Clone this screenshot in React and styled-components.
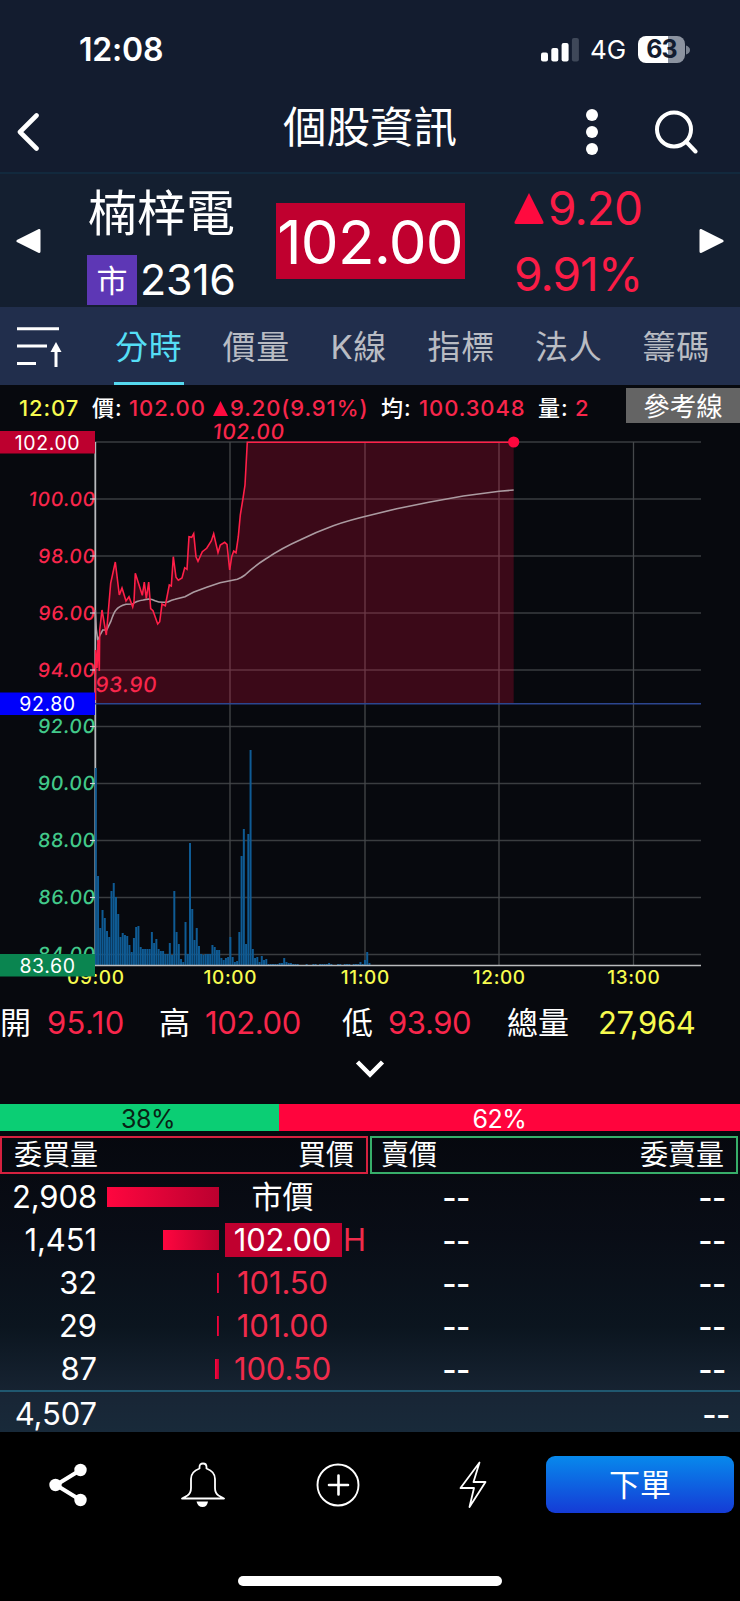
import { useState } from 'react';
import styled, { createGlobalStyle } from 'styled-components';

const GlobalStyle = createGlobalStyle`
  * {
    box-sizing: border-box;
  }
  body {
    margin: 0;
    background: #000;
    color: #fff;
    font-family: Inter, 'Noto Sans CJK TC', sans-serif;
  }
  button {
    padding: 0;
    border: 0;
    background: none;
    color: inherit;
    font-family: inherit;
    cursor: pointer;
  }
  svg {
    display: block;
    flex: none;
  }
`;

const Screen = styled.div`
  width: 740px;
  height: 1601px;
  overflow: hidden;
  display: flex;
  flex-direction: column;
`;

const StatusBar = styled.div`
  height: 98px;
  padding: 1px 50px 0 79px;
  display: flex;
  align-items: center;
  background: #131c2f;
`;

const Clock = styled.div`
  flex: 1;
  font-size: 32px;
  font-weight: 600;
  line-height: 40px;
  letter-spacing: -0.2px;
`;

const Network = styled.div`
  width: 59px;
  padding-left: 11px;
  font-size: 26px;
  line-height: 40px;
  letter-spacing: -0.1px;
`;

const Battery = styled.div`
  width: 47px;
  height: 27px;
  margin-right: 1px;
  border-radius: 8px;
  background: linear-gradient(90deg, #fff 63%, #8c93a0 63%);
  color: #131c2f;
  font-size: 25px;
  font-weight: 700;
  line-height: 27px;
  letter-spacing: -1px;
  text-align: center;
`;

const Header = styled.div`
  height: 76px;
  padding-bottom: 7px;
  display: grid;
  grid-template-columns: 280px 180px 119px 26px 1fr;
  align-items: center;
  background: #131c2f;
  border-bottom: 2px solid #12293d;
`;

const IconButton = styled.button`
  display: flex;
  padding-left: ${({ $left }) => $left || 0}px;
`;

const PageTitle = styled.div`
  grid-column: 2;
  margin-top: -9px;
  font-size: 43.5px;
  line-height: 50px;
  text-align: center;
  white-space: nowrap;
`;

const Quote = styled.div`
  height: 133px;
  display: grid;
  grid-template-columns: 87px 189px 189px 234px 41px;
  background: #141f30;
`;

const Arrow = styled.button`
  padding: 0 0 0 ${({ $left }) => $left}px;
  display: flex;
  align-items: center;
`;

const Stock = styled.div`
  display: flex;
  flex-direction: column;
`;

const StockName = styled.div`
  height: 80px;
  padding: 11px 0 0 1px;
  font-size: 49px;
  line-height: 57px;
`;

const StockCode = styled.div`
  display: flex;
  align-items: center;
  gap: 3px;
  font-size: 43px;
  line-height: 51px;
  letter-spacing: -0.3px;
`;

const Market = styled.span`
  width: 50px;
  height: 50px;
  background: #5d37b5;
  font-size: 31px;
  line-height: 51px;
  text-align: center;
  letter-spacing: 0;
`;

const Price = styled.div`
  height: 76px;
  margin-top: 29px;
  padding-right: 1px;
  background: #c0002f;
  font-size: 60px;
  line-height: 78px;
  text-align: center;
  letter-spacing: -0.8px;
`;

const Change = styled.div`
  padding: 1px 0 0 49px;
  color: #fb1c46;
  font-size: 46px;
  line-height: 66px;
  letter-spacing: -0.9px;
`;

const ChangeRow = styled.div`
  display: flex;
  align-items: center;
  gap: 4px;
`;

const Tabs = styled.div`
  height: 78px;
  display: flex;
  gap: 37.5px;
  background: #212e4c;
  overflow: hidden;
`;

const SortButton = styled(IconButton)`
  width: 76.2px;
`;

const Tab = styled.button`
  min-width: ${({ $narrow }) => ($narrow ? 60 : 70)}px;
  height: 78px;
  border-bottom: 3px solid ${({ $active }) => ($active ? '#55d8ee' : 'transparent')};
  color: ${({ $active }) => ($active ? '#55def5' : '#b9bcc3')};
  font-size: 33px;
  letter-spacing: 0.6px;
  white-space: nowrap;
`;

const ChartPanel = styled.div`
  height: 719px;
  background: #07090e;
`;

const Info = styled.div`
  height: 40px;
  padding-left: 19px;
  display: grid;
  grid-template-columns: 73px 37px 84px 168px 38px 119px 37px 51px 1fr;
  font-size: 22px;
  font-weight: 500;
  line-height: 47px;
  letter-spacing: 0.9px;
  white-space: nowrap;
`;

const InfoText = styled.span`
  color: ${({ $color }) => $color || '#fff'};
`;

const InfoMark = styled.svg`
  display: inline-block;
  margin-right: 2px;
`;

const GuideButton = styled.button`
  height: 35px;
  margin-top: 3px;
  background: #646464;
  color: #fff;
  font-size: 26.5px;
  line-height: 34px;
`;

const ChartCanvas = styled.svg`
  overflow: visible;
`;

const Axis = styled.text`
  fill: ${({ $color }) => $color};
  font-size: ${({ $size }) => $size || 19.5}px;
  font-weight: ${({ $weight }) => $weight || 400};
  letter-spacing: 0.6px;
  text-anchor: ${({ $anchor }) => $anchor || 'middle'};
  transform-box: fill-box;
  transform-origin: center;
  transform: ${({ $slanted }) => ($slanted ? 'skewX(-6deg)' : 'none')};
`;

const Stats = styled.div`
  height: 62px;
  padding-top: 1px;
  display: grid;
  grid-template-columns: 47px 112px 46px 137px 46px 119px 91px 1fr;
  align-items: center;
  font-size: 31px;
  white-space: nowrap;
`;

const Stat = styled.span`
  color: ${({ $color }) => $color || '#fff'};
  letter-spacing: ${({ $spacing, $color }) => $spacing ?? ($color ? -0.4 : 0)}px;
  line-height: ${({ $color }) => ($color ? 40 : 36)}px;
`;

const Expand = styled.button`
  width: 100%;
  height: 42px;
  padding-top: 6px;
  display: flex;
  justify-content: center;
`;

const Ratio = styled.div`
  height: 27px;
  display: grid;
  grid-template-columns: 278.5px 1fr;
  font-size: 25px;
  line-height: 30px;
`;

const RatioPart = styled.div`
  padding-left: ${({ $left }) => $left}px;
  background: ${({ $bg }) => $bg};
  color: ${({ $color }) => $color};
  letter-spacing: -0.5px;
`;

const Book = styled.div`
  height: 301px;
  padding-top: 5px;
  background: linear-gradient(#06080e, #090d16 35%, #0b151f 65%, #172433 88%);
`;

const BookHead = styled.div`
  margin-bottom: 1px;
  display: grid;
  grid-template-columns: 368px 368px;
  gap: 2px;
`;

const BookTitle = styled.div`
  height: 38px;
  padding: 0 12px 0 ${({ $left }) => $left}px;
  display: flex;
  justify-content: space-between;
  border: 2px solid ${({ $color }) => $color};
  font-size: 28px;
  line-height: 35px;
`;

const Level = styled.div`
  height: 43px;
  display: grid;
  grid-template-columns: 97px 122px 6px 117px 28px 100px 1fr;
  align-items: center;
  font-size: 31px;
`;

const Amount = styled.span`
  text-align: right;
  letter-spacing: -0.1px;
`;

const Depth = styled.span`
  height: 20px;
  justify-self: end;
  background: linear-gradient(90deg, #ff063f, #bb002f);
`;

const LevelPrice = styled.span`
  grid-column: 4;
  height: 34px;
  line-height: 34px;
  padding-right: 2px;
  text-align: center;
  letter-spacing: -0.1px;
  color: ${({ $market, $hit }) => ($market || $hit ? '#fff' : '#f02b4b')};
  background: ${({ $hit }) => ($hit ? '#c0002f' : 'none')};
`;

const HighMark = styled.span`
  padding-left: 1px;
  color: #f02b4b;
`;

const Dash = styled.span`
  padding: 2px ${({ $right }) => $right || 0}px 0 0;
  font-weight: 500;
  letter-spacing: -0.4px;
  text-align: right;
`;

const Total = styled.div`
  height: 42px;
  display: grid;
  grid-template-columns: 97px 1fr;
  align-items: center;
  border-top: 2px solid #205870;
  background: linear-gradient(#182535, #182a3a);
  font-size: 31px;
  line-height: 36px;
  padding-top: 3px;
`;

const Dock = styled.div`
  height: 145px;
  padding-top: 24px;
  display: grid;
  grid-template-columns: 135px 135px 135px 135px 6px 188px;
  grid-template-rows: 57px 1fr;
  background: #000;
`;

const DockButton = styled.button`
  display: flex;
  align-items: center;
  justify-content: center;
`;

const OrderButton = styled.button`
  grid-column: 6;
  border-radius: 9px;
  background: linear-gradient(#0789ec, #153bd6);
  color: #fff;
  font-size: 31px;
  line-height: 55px;
`;

const HomeBar = styled.div`
  grid-column: 1 / -1;
  width: 264px;
  height: 10px;
  margin: 63px 0 0 238px;
  border-radius: 5px;
  background: #fff;
`;

const tabs = ['分時', '價量', 'K線', '指標', '法人', '籌碼'];

const levels = [
  { amount: '2,908', depth: 112, price: '市價', market: true },
  { amount: '1,451', depth: 56, price: '102.00', hit: true },
  { amount: '32', depth: 2, price: '101.50' },
  { amount: '29', depth: 2, price: '101.00' },
  { amount: '87', depth: 4, price: '100.50' },
];

const red = '#f8264b';
const green = '#42c98a';
const yellow = '#f6fb4f';

const gridRows = [
  { y: 442 },
  { y: 499, label: '100.00', color: red },
  { y: 556, label: '98.00', color: red },
  { y: 613, label: '96.00', color: red },
  { y: 670, label: '94.00', color: red },
  { y: 726.5, label: '92.00', color: green },
  { y: 783.5, label: '90.00', color: green },
  { y: 840.5, label: '88.00', color: green },
  { y: 897.5, label: '86.00', color: green },
  { y: 954.5, label: '84.00', color: green },
];

const gridCols = [
  { x: 95.5, label: '09:00' },
  { x: 230, label: '10:00' },
  { x: 365, label: '11:00' },
  { x: 499, label: '12:00' },
  { x: 633.5, label: '13:00' },
];

const pricePath =
  '95.3,700 95.6,650 97,668 98,640 99.3,671 99.7,630 102,610 106.3,635 110.7,583 115.3,562 119.3,595 122,588 126,601 129,596.7 132.7,607 134,601.7 135.3,573.3 142.3,595.3 144.3,582 146.3,598.3 148.7,582 150.7,608.7 153,610.7 157.7,624 159.7,621.7 162,604 165.3,605.7 169.3,585 171.3,586 173.3,556.7 176,577.3 178.3,580.3 182,578 184.7,567.7 187,569.3 189,536.7 191.7,537.3 193.7,533.7 196,556.7 198,561.3 202.3,551.7 206.7,548.3 211.3,541 213.7,533.7 218,552.7 220.3,545 224.7,542.3 227,544.3 229.7,570 231.7,556.7 233.7,551 236,552.7 238.3,536.7 240.3,515 243,498.3 245,485 247.3,442.3 513.7,442.3';

const averagePath =
  'M95.3 610 L96.3 629 L97.7 640 Q98.5 639 100 635 L102.7 630 L106.7 630 L110.7 621.7 Q114 612 116 610 Q119 606 126 604.3 L132.7 604 Q136 601 143.3 600 Q150 598 155 600.7 Q160 603 167.7 602 Q172 600 175 599.3 L185 596.7 L193.3 592.3 L206.7 587.3 L220 582.7 L230 580.7 L237.3 579.3 Q241 578 245 575 Q253 567 266.7 558.3 Q282 548 300 540 Q316 532 333.3 525.7 Q350 520 370 515.3 L396.7 508.7 L430 502 L463.3 496 L499.3 491.3 L513.7 490';

// one bar per minute from 09:00
const volumes = [
  197, 89, 37, 55, 47, 34, 28, 74, 82, 68, 51, 28, 32, 30, 29, 20, 13, 27, 38, 39, 18, 16, 16, 16, 16, 33, 22, 26, 16,
  14, 14, 11, 11, 22, 10, 74, 33, 21, 6, 3, 43, 11, 122, 56, 25, 37, 19, 11, 10, 11, 11, 11, 20, 18, 15, 15, 7, 5, 7, 8,
  28, 8, 3, 4, 33, 109, 136, 21, 131, 215, 16, 7, 8, 3, 9, 5, 6, 1, 1, 1, 1, 1, 2, 2, 7, 3, 2, 2, 1, 1, 1, 0, 0, 0, 1, 0,
  0, 1, 1, 0, 1, 1, 1, 1, 2, 1, 0, 0, 1, 1, 0, 1, 1, 1, 0, 1, 1, 1, 3, 1, 5, 13, 2,
];

function Chart() {
  return (
    <ChartCanvas width='740' height='566' viewBox='0 425 740 566'>
      {gridRows.map(({ y }) => (
        <path key={y} d={`M95 ${y}H701`} stroke='#3a3d40' strokeWidth='1.4' />
      ))}
      {gridCols.slice(1).map(({ x }) => (
        <path key={x} d={`M${x} 442V965`} stroke='#45484b' strokeWidth='1.3' />
      ))}
      <path d='M95.3 442V965' stroke='#b8babd' strokeWidth='1.8' />
      <polygon points={`${pricePath} 513.7,703.5 95.3,703.5`} fill='#ff0a3c' fillOpacity='0.21' />
      {volumes.map((v, i) => (
        <rect key={i} x={94.8 + i * 2.243} y={965 - v} width='2' height={v} fill='#0f5b94' />
      ))}
      <path d='M95 703.7H701' stroke='#2c468f' strokeWidth='1.6' />
      <path d='M95 965.5H701' stroke='#b9bbbd' strokeWidth='1.3' />
      <path d={averagePath} fill='none' stroke='#ab9ba1' strokeWidth='1.6' />
      <polyline points={pricePath} fill='none' stroke='#ff1f48' strokeWidth='1.6' />
      <circle cx='513.7' cy='442' r='5.6' fill='#ff073e' />
      {gridRows.slice(1).map(({ y, label, color }) => (
        <g key={label}>
          <Axis x='96' y={y + 7} $color={color} $anchor='end' $weight={450} $slanted>
            {label}
          </Axis>
          <path d={`M90 ${y}H95`} stroke='#d0d2d4' strokeWidth='1.2' />
        </g>
      ))}
      {gridCols.map(({ x, label }) => (
        <Axis key={label} x={x + 0.3} y='983.7' $color={yellow} $weight={550} $size={19}>
          {label}
        </Axis>
      ))}
      <Axis x='249' y='439.5' $color={red} $weight={450} $size={21} $slanted>
        102.00
      </Axis>
      <Axis x='126.5' y='692' $color={red} $weight={450} $size={21} $slanted>
        93.90
      </Axis>
      <rect x='0' y='431' width='95' height='22.5' fill='#bd002f' />
      <Axis x='47.5' y='449.5' $color='#fff'>
        102.00
      </Axis>
      <rect x='0' y='692.5' width='95' height='22.5' fill='#0000fb' />
      <Axis x='47.5' y='711' $color='#fff'>
        92.80
      </Axis>
      <rect x='0' y='954' width='95' height='22.5' fill='#0a8550' />
      <Axis x='47.5' y='972.5' $color='#fff'>
        83.60
      </Axis>
    </ChartCanvas>
  );
}

function App() {
  const [activeTab, setActiveTab] = useState('分時');

  return (
    <>
      <GlobalStyle />
      <Screen>
        <StatusBar>
          <Clock>12:08</Clock>
          <svg width='38' height='24' viewBox='0 0 38 24' fill='#fff'>
            <rect x='0' y='14.5' width='7' height='9' rx='2' />
            <rect x='10.3' y='10' width='7' height='13.5' rx='2' />
            <rect x='20.6' y='5' width='7' height='18.5' rx='2' />
            <rect x='30.9' y='0' width='7' height='23.5' rx='2' fill='#3f4859' />
          </svg>
          <Network>4G</Network>
          <Battery>63</Battery>
          <svg width='4' height='10' viewBox='0 0 4 10'>
            <path d='M0 0.5Q4 2 4 5T0 9.5Z' fill='#7b8391' />
          </svg>
        </StatusBar>

        <Header>
          <IconButton $left={17}>
            <svg width='23' height='38' viewBox='0 0 23 38' fill='none' stroke='#fff' strokeWidth='4.6' strokeLinecap='round' strokeLinejoin='round'>
              <path d='M19.5 2.5L3 19L19.5 35.5' />
            </svg>
          </IconButton>
          <PageTitle>個股資訊</PageTitle>
          <IconButton $left={126}>
            <svg width='12' height='46' viewBox='0 0 12 46' fill='#fff'>
              <circle cx='6' cy='6' r='6' />
              <circle cx='6' cy='23' r='6' />
              <circle cx='6' cy='40' r='6' />
            </svg>
          </IconButton>
          <span />
          <IconButton $left={50}>
            <svg width='44' height='44' viewBox='0 0 44 44' fill='none' stroke='#fff' strokeWidth='4' strokeLinecap='round'>
              <circle cx='19' cy='19.5' r='17' />
              <path d='M31.5 32L40.5 41.5' />
            </svg>
          </IconButton>
        </Header>

        <Quote>
          <Arrow $left={16}>
            <svg width='25' height='24' viewBox='0 0 25 24' fill='#fff' stroke='#fff' strokeWidth='3' strokeLinejoin='round'>
              <path d='M23 1.5V22.5L2 12Z' />
            </svg>
          </Arrow>
          <Stock>
            <StockName>楠梓電</StockName>
            <StockCode>
              <Market>市</Market>
              2316
            </StockCode>
          </Stock>
          <Price>102.00</Price>
          <Change>
            <ChangeRow>
              <svg width='30' height='31' viewBox='0 0 30 31'>
                <path d='M15 0L29.5 29Q30 31 28 31H2Q0 31 0.5 29Z' fill='#ff0a3f' />
              </svg>
              9.20
            </ChangeRow>
            <ChangeRow>9.91%</ChangeRow>
          </Change>
          <Arrow $left={0}>
            <svg width='25' height='24' viewBox='0 0 25 24' fill='#fff' stroke='#fff' strokeWidth='3' strokeLinejoin='round'>
              <path d='M2 1.5V22.5L23 12Z' />
            </svg>
          </Arrow>
        </Quote>

        <Tabs>
          <SortButton $left={17}>
            <svg width='46' height='78' viewBox='0 0 46 78' fill='none' stroke='#fff' strokeWidth='3'>
              <path d='M0 21.7H42M0 39H30M0 56.5H19M39 60V40' />
              <path d='M39 35L44.5 45H33.5Z' fill='#fff' stroke='none' />
            </svg>
          </SortButton>
          {tabs.map((tab) => (
            <Tab key={tab} $narrow={tab === 'K線'} $active={tab === activeTab} onClick={() => setActiveTab(tab)}>
              {tab}
            </Tab>
          ))}
        </Tabs>

        <ChartPanel>
          <Info>
            <InfoText $color={yellow}>12:07</InfoText>
            <InfoText>價:</InfoText>
            <InfoText $color={red}>102.00</InfoText>
            <InfoText $color={red}>
              <InfoMark width='15' height='15' viewBox='0 0 15 15'>
                <path d='M7.5 0L15 15H0Z' fill='#ff0a3f' />
              </InfoMark>
              9.20(9.91%)
            </InfoText>
            <InfoText>均:</InfoText>
            <InfoText $color={red}>100.3048</InfoText>
            <InfoText>量:</InfoText>
            <InfoText $color={red}>2</InfoText>
            <GuideButton>參考線</GuideButton>
          </Info>
          <Chart />
          <Stats>
            <Stat>開</Stat>
            <Stat $color={red} $spacing={0.4}>
              95.10
            </Stat>
            <Stat>高</Stat>
            <Stat $color={red}>102.00</Stat>
            <Stat>低</Stat>
            <Stat $color={red}>93.90</Stat>
            <Stat>總量</Stat>
            <Stat $color={yellow}>27,964</Stat>
          </Stats>
          <Expand>
            <svg width='30' height='22' viewBox='0 0 30 22' fill='none' stroke='#fff' strokeWidth='4.5'>
              <path d='M2.5 3L15 15.5L27.5 3' />
            </svg>
          </Expand>
        </ChartPanel>

        <Ratio>
          <RatioPart $left={121} $bg='#0bce74' $color='#082315'>
            38%
          </RatioPart>
          <RatioPart $left={194} $bg='#ff043d' $color='#fff'>
            62%
          </RatioPart>
        </Ratio>

        <Book>
          <BookHead>
            <BookTitle $left={12} $color='#d5213f'>
              <span>委買量</span>
              <span>買價</span>
            </BookTitle>
            <BookTitle $left={9} $color='#37ae6a'>
              <span>賣價</span>
              <span>委賣量</span>
            </BookTitle>
          </BookHead>
          {levels.map(({ amount, depth, price, market, hit }) => (
            <Level key={amount}>
              <Amount>{amount}</Amount>
              <Depth style={{ width: depth }} />
              <LevelPrice $market={market} $hit={hit}>
                {price}
              </LevelPrice>
              <HighMark>{hit && 'H'}</HighMark>
              <Dash>--</Dash>
              <Dash $right={14}>--</Dash>
            </Level>
          ))}
          <Total>
            <Amount>4,507</Amount>
            <Dash $right={10}>--</Dash>
          </Total>
        </Book>

        <Dock>
          <DockButton>
            <svg width='38' height='44' viewBox='0 0 38 44' fill='#fff'>
              <path d='M31.5 7L7 22L31.5 37' fill='none' stroke='#fff' strokeWidth='4' />
              <circle cx='31.5' cy='7' r='6.2' />
              <circle cx='6.5' cy='22' r='6.2' />
              <circle cx='31.5' cy='37' r='6.2' />
            </svg>
          </DockButton>
          <DockButton>
            <svg width='44' height='46' viewBox='0 0 44 46' fill='none' stroke='#fff' strokeWidth='1.8' strokeLinejoin='round'>
              <path d='M18.5 6.5V5Q18.5 1.5 22 1.5T25.5 5V6.5Q34 9.5 34 17V26Q34 31 37.5 33.5L43 36.5H1L6.5 33.5Q10 31 10 26V17Q10 9.5 18.5 6.5Z' />
              <path d='M15.5 39.5H27Q26 45 21.5 45T15.5 39.5Z' fill='#fff' stroke='none' />
            </svg>
          </DockButton>
          <DockButton>
            <svg width='44' height='44' viewBox='0 0 44 44' fill='none' stroke='#fff' strokeWidth='1.9' strokeLinecap='round'>
              <circle cx='22' cy='22' r='20.5' />
              <path d='M22.5 12.5V31.5M13 22H32' strokeWidth='2.6' />
            </svg>
          </DockButton>
          <DockButton>
            <svg width='28' height='48' viewBox='0 0 28 48' fill='none' stroke='#fff' strokeWidth='1.8' strokeLinejoin='round'>
              <path d='M20.5 1.5L1.5 27H15L10.5 46L26.5 21H14.5Z' />
            </svg>
          </DockButton>
          <OrderButton>下單</OrderButton>
          <HomeBar />
        </Dock>
      </Screen>
    </>
  );
}

export default App;
